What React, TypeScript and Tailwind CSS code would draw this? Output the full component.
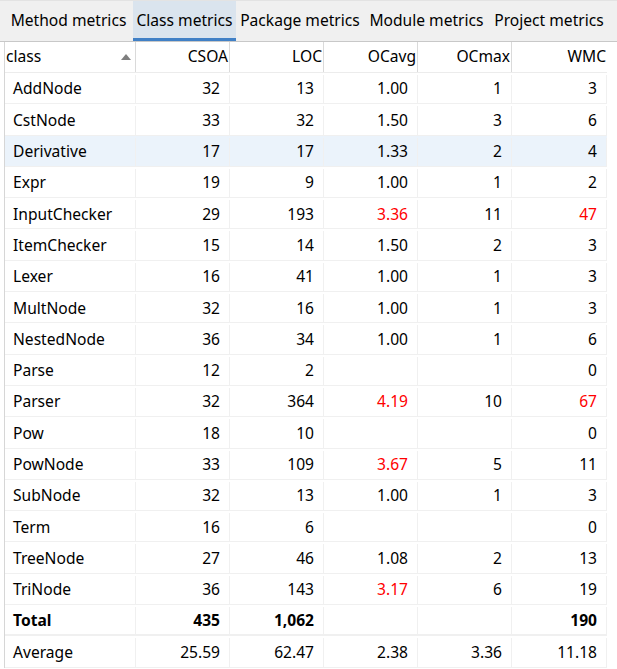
import React from 'react';

type Row = {
  name: string;
  csoa: string;
  loc: string;
  ocavg: string;
  ocmax: string;
  wmc: string;
  hotAvg?: boolean;
  hotWmc?: boolean;
};

const rows: Row[] = [
  { name: 'AddNode', csoa: '32', loc: '13', ocavg: '1.00', ocmax: '1', wmc: '3' },
  { name: 'CstNode', csoa: '33', loc: '32', ocavg: '1.50', ocmax: '3', wmc: '6' },
  { name: 'Derivative', csoa: '17', loc: '17', ocavg: '1.33', ocmax: '2', wmc: '4' },
  { name: 'Expr', csoa: '19', loc: '9', ocavg: '1.00', ocmax: '1', wmc: '2' },
  { name: 'InputChecker', csoa: '29', loc: '193', ocavg: '3.36', ocmax: '11', wmc: '47', hotAvg: true, hotWmc: true },
  { name: 'ItemChecker', csoa: '15', loc: '14', ocavg: '1.50', ocmax: '2', wmc: '3' },
  { name: 'Lexer', csoa: '16', loc: '41', ocavg: '1.00', ocmax: '1', wmc: '3' },
  { name: 'MultNode', csoa: '32', loc: '16', ocavg: '1.00', ocmax: '1', wmc: '3' },
  { name: 'NestedNode', csoa: '36', loc: '34', ocavg: '1.00', ocmax: '1', wmc: '6' },
  { name: 'Parse', csoa: '12', loc: '2', ocavg: '', ocmax: '', wmc: '0' },
  { name: 'Parser', csoa: '32', loc: '364', ocavg: '4.19', ocmax: '10', wmc: '67', hotAvg: true, hotWmc: true },
  { name: 'Pow', csoa: '18', loc: '10', ocavg: '', ocmax: '', wmc: '0' },
  { name: 'PowNode', csoa: '33', loc: '109', ocavg: '3.67', ocmax: '5', wmc: '11', hotAvg: true },
  { name: 'SubNode', csoa: '32', loc: '13', ocavg: '1.00', ocmax: '1', wmc: '3' },
  { name: 'Term', csoa: '16', loc: '6', ocavg: '', ocmax: '', wmc: '0' },
  { name: 'TreeNode', csoa: '27', loc: '46', ocavg: '1.08', ocmax: '2', wmc: '13' },
  { name: 'TriNode', csoa: '36', loc: '143', ocavg: '3.17', ocmax: '6', wmc: '19', hotAvg: true },
];

const tabs = [
  { label: 'Method metrics', w: 'w-[129px]' },
  { label: 'Class metrics', w: 'w-[103px]' },
  { label: 'Package metrics', w: 'w-[128px]' },
  { label: 'Module metrics', w: 'w-[125px]' },
  { label: 'Project metrics', w: 'w-[120px]' },
];

// class column + five metric columns
const cols = 'grid grid-cols-[131px_94px_94px_94px_94px_95px]';
const cell = 'flex items-center justify-end pr-[9px] border-r border-[#f0f0f0]';

const App: React.FC = () => {
  return (
    <div className="w-[617px] h-[669px] bg-white overflow-hidden text-[15.6px] text-black" style={{ fontFamily: '"Noto Sans", "Open Sans", sans-serif' }}>
      {/* Tabs */}
      <div className="h-[42px] bg-[#f0f0f0] border-t border-[#e3e3e3] border-b border-b-[#c8c8c8] flex pl-[4px]">
        {tabs.map((t) => (
          <div
            key={t.label}
            className={`${t.w} h-full flex items-center justify-center ${t.label === 'Class metrics' ? 'bg-[#dae4ee] border-b-[3px] border-[#4080c6] pt-[3px]' : ''}`}
          >
            {t.label}
          </div>
        ))}
      </div>

      <div className="ml-[4px] border-l border-[#d6d6d6] w-[603px]">
        {/* Header */}
        <div className={`${cols} h-[31px] border-b border-[#ececec]`}>
          <div className="flex items-center justify-between pl-[1px] pr-[4px] border-r border-[#dadada]">
            <span>class</span>
            <svg width="10" height="6" viewBox="0 0 10 6">
              <path d="M0 6 L5 0 L10 6 Z" fill="#7f7f7f" />
            </svg>
          </div>
          {['CSOA', 'LOC', 'OCavg', 'OCmax', 'WMC'].map((h, i) => (
            <div key={h} className={`flex items-center justify-end pr-[1px] ${i < 4 ? 'border-r border-[#dadada]' : ''}`}>
              {h}
            </div>
          ))}
        </div>

        {rows.map((r) => (
          <div key={r.name} className={`${cols} h-[31.3px] pt-[2px] border-b border-[#f0f0f0] ${r.name === 'Derivative' ? 'bg-[#ebf3fb]' : ''}`}>
            <div className="flex items-center pl-[8px] border-r border-[#f0f0f0]">{r.name}</div>
            <div className={cell}>{r.csoa}</div>
            <div className={cell}>{r.loc}</div>
            <div className={`${cell} ${r.hotAvg ? 'text-[#ff0000]' : ''}`}>{r.ocavg}</div>
            <div className={cell}>{r.ocmax}</div>
            <div className={`${cell} ${r.hotWmc ? 'text-[#ff0000]' : ''}`}>{r.wmc}</div>
          </div>
        ))}

        {/* Summary rows */}
        <div className={`${cols} h-[31.3px] pt-[2px] border-b-2 border-[#f0f0f0] font-bold`}>
          <div className="flex items-center pl-[8px] border-r border-[#f0f0f0]">Total</div>
          <div className={cell}>435</div>
          <div className={cell}>1,062</div>
          <div className={cell}></div>
          <div className={cell}></div>
          <div className={cell}>190</div>
        </div>
        <div className={`${cols} h-[31.3px] pt-[2px] border-b border-[#f0f0f0]`}>
          <div className="flex items-center pl-[8px] border-r border-[#f0f0f0]">Average</div>
          <div className={cell}>25.59</div>
          <div className={cell}>62.47</div>
          <div className={cell}>2.38</div>
          <div className={cell}>3.36</div>
          <div className={cell}>11.18</div>
        </div>
      </div>
    </div>
  );
};

export default App;
